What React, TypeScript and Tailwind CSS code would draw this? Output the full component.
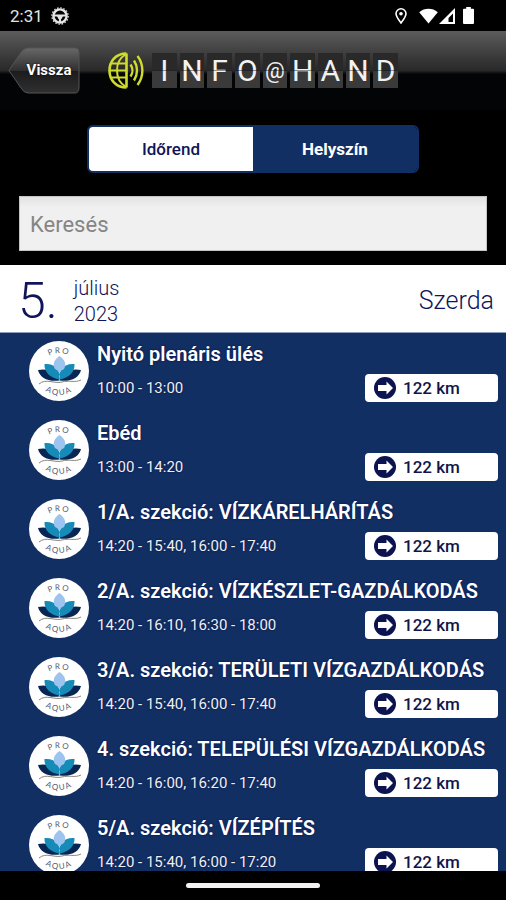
import { useId, useState } from 'react';

interface Session {
  title: string;
  time: string;
  distance: string;
}

const sessions: Session[] = [
  { title: 'Nyitó plenáris ülés', time: '10:00 - 13:00', distance: '122 km' },
  { title: 'Ebéd', time: '13:00 - 14:20', distance: '122 km' },
  { title: '1/A. szekció: VÍZKÁRELHÁRÍTÁS', time: '14:20 - 15:40, 16:00 - 17:40', distance: '122 km' },
  { title: '2/A. szekció: VÍZKÉSZLET-GAZDÁLKODÁS', time: '14:20 - 16:10, 16:30 - 18:00', distance: '122 km' },
  { title: '3/A. szekció: TERÜLETI VÍZGAZDÁLKODÁS', time: '14:20 - 15:40, 16:00 - 17:40', distance: '122 km' },
  { title: '4. szekció: TELEPÜLÉSI VÍZGAZDÁLKODÁS', time: '14:20 - 16:00, 16:20 - 17:40', distance: '122 km' },
  { title: '5/A. szekció: VÍZÉPÍTÉS', time: '14:20 - 15:40, 16:00 - 17:20', distance: '122 km' },
];

function StatusBar() {
  return (
    <div className="flex h-[31px] shrink-0 items-center bg-black pl-[10px] pr-8 text-[#e4e4e4]">
      <span className="text-[17px] leading-5">2:31</span>
      <svg className="ml-2 size-[18px]" viewBox="0 0 18 18" fill="none" stroke="currentColor">
        <circle cx="9" cy="9" r="6.6" strokeWidth="2.4" />
        <circle cx="9" cy="9" r="8.2" strokeWidth="1.2" strokeDasharray="1.6 1.62" />
        <path d="M2.5 8.5h13M9 9v6.500" strokeWidth="2.200" />
        <path d="M6 9h6l-1.500 3h-3z" fill="currentColor" stroke="none" />
      </svg>
      <div className="ml-auto flex items-center">
        <svg className="h-4 w-3" viewBox="0 0 12 16" fill="none" stroke="#fff">
          <path d="M6 15C3 11 1 8.500 1 5.800a5 5 0 0 1 10 0C11 8.500 9 11 6 15z" strokeWidth="1.600" />
          <circle cx="6" cy="5.800" r="1.800" fill="#fff" stroke="none" />
        </svg>
        <svg className="ml-3 h-4 w-[19px]" viewBox="0 0 19 16" fill="#fff">
          <path d="M9.500 15.500L.2 4.200C5.500-.3 13.500-.3 18.800 4.200z" />
        </svg>
        <svg className="ml-px h-4 w-4" viewBox="0 0 16 16" fill="#fff">
          <path fillRule="evenodd" d="M16 0v16H0zM14 5.500L9.500 10v4H14z" />
        </svg>
        <svg className="ml-2 h-[17px] w-[11px]" viewBox="0 0 11 17" fill="#fff">
          <path d="M3.200 0h4.600v1.700H10a1 1 0 0 1 1 1V16a1 1 0 0 1-1 1H1a1 1 0 0 1-1-1V2.700a1 1 0 0 1 1-1h2.200z" />
        </svg>
      </div>
    </div>
  );
}

function BackButton() {
  return (
    <button type="button" className="relative h-[47px] w-[74px] pl-2 text-[15px] font-bold text-white">
      <svg className="absolute inset-0 size-full" viewBox="0 0 74 47" preserveAspectRatio="none">
        <defs>
          <linearGradient id="back" x1="0" y1="0" x2="0" y2="1">
            <stop offset="0" stopColor="#686868" />
            <stop offset="0.5" stopColor="#303030" />
            <stop offset="0.52" stopColor="#1c1c1c" />
            <stop offset="1" stopColor="#303030" />
          </linearGradient>
        </defs>
        <path
          d="M1 23.500L13 5.500Q16 1 20 1H67Q71 1 71 5V40Q71 46 67 46H20Q16 46 13 41z"
          fill="url(#back)"
          stroke="#555"
          strokeWidth="1"
        />
      </svg>
      <span className="relative [text-shadow:0_0_2px_#000]">Vissza</span>
    </button>
  );
}

function Brand() {
  return (
    <div className="flex items-center gap-[6px]">
      <svg className="h-[37px] w-[38px]" viewBox="0 0 37 37" fill="none" stroke="#cfdc2c" strokeWidth="2">
        <path d="M18 1.500V35.500M18 1.500C7 1.500 1 9.500 1 18.500S7 35.500 18 35.500" strokeWidth="2.600" />
        <path d="M17 2.500C11 6 8.500 11 8.500 18.500S11 31 17 34.500M3 11.500H18M1.500 18.500H18M3 25.500H18" />
        <path d="M22 12.500C24.500 16 24.500 21 22 24.500M25.500 8.500C29.500 14.500 29.500 22.500 25.500 28.500M29 4C35.500 12.500 35.500 24.500 29 33" strokeWidth="2.400" />
      </svg>
      <div className="grid w-[246px] grid-cols-9 gap-[3px]">
        {[...'INFO@HAND'].map((letter, i) => (
          <span
            key={i}
            className="relative flex h-[35px] items-center justify-center bg-linear-to-b from-[#292929] from-50% to-[#3a3a3a] to-50% text-[30px] leading-none text-[#f2f2f2] after:absolute after:inset-x-0 after:top-[17px] after:h-px after:bg-black/40"
          >
            {letter === '@' ? <span className="text-[22px]">@</span> : letter}
          </span>
        ))}
      </div>
    </div>
  );
}

function LotusLogo() {
  const id = useId();
  return (
    <svg className="size-[60px] shrink-0" viewBox="0 0 60 60">
      <circle cx="30" cy="30" r="30" fill="#fff" />
      <path id={`${id}top`} d="M11 31a19 19 0 0 1 38 0" fill="none" />
      <path id={`${id}bottom`} d="M5 29a25 25 0 0 0 50 0" fill="none" />
      <g fontFamily="Lato, sans-serif" fontSize="8" fill="#555d70" textAnchor="middle">
        <text letterSpacing="1.500">
          <textPath href={`#${id}top`} startOffset="50%">PRO</textPath>
        </text>
        <text letterSpacing="1.500">
          <textPath href={`#${id}bottom`} startOffset="50%">AQUA</textPath>
        </text>
      </g>
      <path d="M9 29C18 27 27 30 30.500 39.500C19 41 11 37 9 29zM52 29C43 27 34 30 30.500 39.500C42 41 50 37 52 29z" fill="#082654" />
      <path d="M15.500 23C26 22 32 29 30.500 38.500C21 37 15 31 15.500 23zM45.500 23C35 22 29 29 30.500 38.500C40 37 46 31 45.500 23z" fill="#168bb8" />
      <path d="M30.500 15C24.500 19 23.500 24 26 28Q29 29 30.500 32Q32 29 35 28C37.500 24 36.500 19 30.500 15z" fill="#9cc4ee" />
      <path d="M10 43C17 37 25 43 33 41C40 39 46 42 52 39" fill="none" stroke="#8b8579" strokeWidth="1" />
    </svg>
  );
}

function SessionRow({ title, time, distance }: Session) {
  return (
    <li className="flex h-[79px] gap-2 pl-[29px] pr-2 pt-2">
      <LotusLogo />
      <div className="min-w-0 flex-1 pt-px">
        <h2 className="whitespace-nowrap text-[20px] font-semibold leading-6 text-white [text-shadow:0_0_2px_#050b48]">{title}</h2>
        <div className="mt-2 flex items-center justify-between">
          <span className="text-[15px] leading-4 text-[#f0f0f0] [text-shadow:0_0_2px_#050b48]">{time}</span>
          <button
            type="button"
            className="flex h-7 w-[133px] items-center gap-[7px] rounded bg-white pl-[9px] text-[17px] leading-4 font-medium text-[#10144a]"
          >
            <svg className="size-[22px]" viewBox="0 0 22 22">
              <circle cx="11" cy="11" r="11" fill="#0b1350" />
              <path d="M4 8H12.500V4.500L19 11l-6.500 6.500V14H4z" fill="#fff" />
            </svg>
            {distance}
          </button>
        </div>
      </div>
    </li>
  );
}

export default function App() {
  const [tab, setTab] = useState('time');

  const tabClass = (name: string) =>
    name === tab ? 'bg-white text-[#10145a] font-medium' : 'bg-[#112f63] text-white font-bold';

  return (
    <div className="flex h-screen flex-col overflow-hidden bg-black font-['Roboto',sans-serif]">
      <StatusBar />
      <header className="flex h-[79px] shrink-0 items-center gap-[26px] bg-linear-to-b from-[#5c5c5c] via-[#292929] via-50% to-[#030405] to-55% pl-2">
        <BackButton />
        <Brand />
      </header>

      <div className="mx-auto mt-[15px] grid h-12 w-[332px] shrink-0 grid-cols-2 overflow-hidden rounded-md border-2 border-[#112f63] text-[17px] leading-6">
        <button type="button" className={tabClass('time')} onClick={() => setTab('time')}>
          Időrend
        </button>
        <button type="button" className={tabClass('place')} onClick={() => setTab('place')}>
          Helyszín
        </button>
      </div>

      <div className="mx-[19px] mt-[23px] shrink-0">
        <input
          type="search"
          aria-label="Keresés"
          placeholder="Keresés"
          className="block h-[55px] w-full border border-[#c4c4c4] bg-linear-to-b from-[#e2e2e2] to-[#f0f0f0] to-20% px-[10px] pt-[2px] text-[22px] text-[#333] placeholder:text-[#858585]"
        />
      </div>

      <div className="mt-[14px] flex h-[68px] shrink-0 items-center border-b border-[#8fa0bd] bg-white pl-[18px] pr-3 pt-1 text-[#10145a]">
        <span className="text-[50px] leading-none font-[350]">5.</span>
        <div className="ml-4 text-[20px] leading-[26px] font-light">
          <p>július</p>
          <p>2023</p>
        </div>
        <span className="ml-auto text-[25px] font-[350]">Szerda</span>
      </div>

      <ul className="min-h-0 flex-1 overflow-hidden bg-[#112f63]">
        {sessions.map((session) => (
          <SessionRow key={session.title} {...session} />
        ))}
      </ul>

      <div className="flex h-[29px] shrink-0 items-center justify-center bg-black">
        <div className="h-[5px] w-[134px] rounded-sm bg-[#f2f2f2]" />
      </div>
    </div>
  );
}
